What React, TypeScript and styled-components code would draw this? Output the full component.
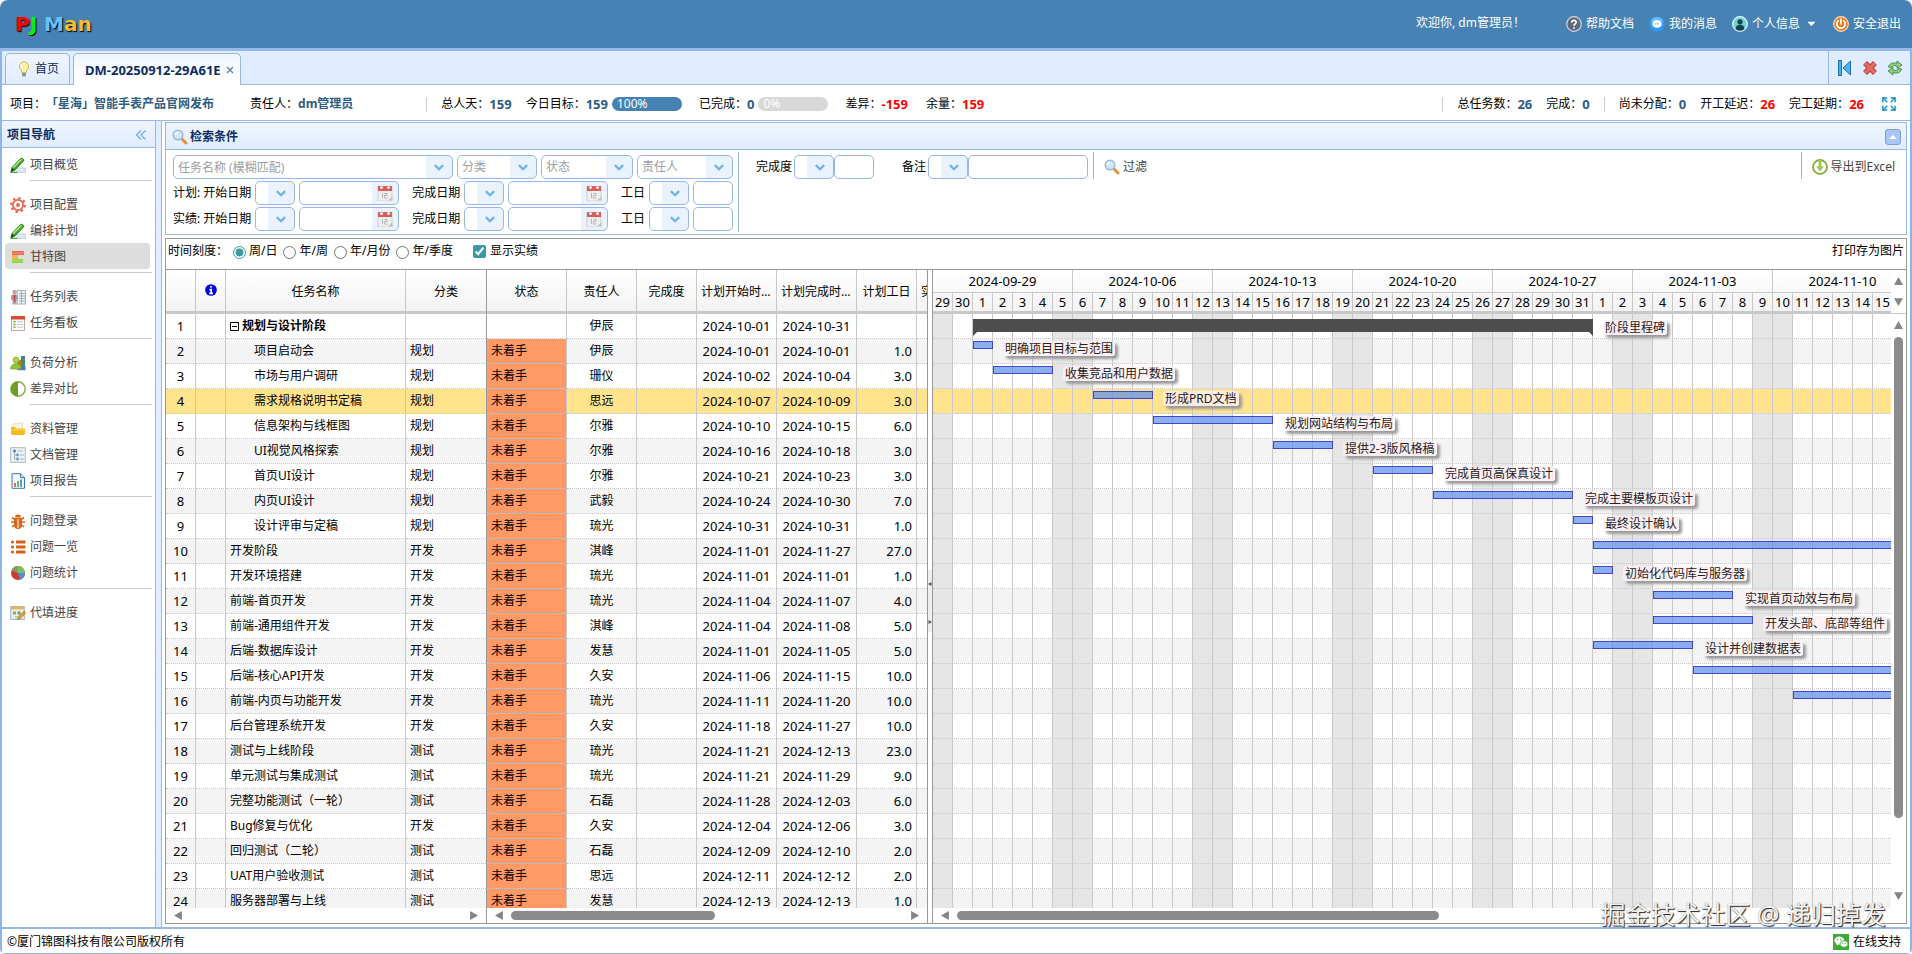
import React from "react";
import styled, { createGlobalStyle, css } from "styled-components";

const GlobalStyle = createGlobalStyle`
  *, *::before, *::after { box-sizing: border-box; }
  body {
    margin: 0;
    background: #fff;
    color: #000;
    font-family: "Noto Sans", "Noto Sans CJK SC", sans-serif;
    font-size: 12px;
    line-height: 16px;
  }
  button, input, select { font: inherit; color: inherit; }
  button { border: 0; padding: 0; background: none; cursor: pointer; }
  a { color: inherit; text-decoration: none; }
`;

const edge = "#95b8e7";
const rule = "#c8c8c8";
const frame = "#999";
const DAY = 20;
const ROW = 25;

/* ---------- page frame ---------- */

const Page = styled.div`
  display: flex;
  flex-direction: column;
  height: 100vh;
  overflow: hidden;
  position: relative;
`;

const Banner = styled.header`
  display: flex;
  align-items: center;
  height: 51px;
  flex: none;
  padding: 0 11px 0 15px;
  background: #4682b4;
  border-bottom: 3px solid ${edge};
  border-radius: 8px 8px 0 0;
  color: #fff;
`;

const Logo = styled.h1`
  margin: 0 auto 0 0;
  font: bold 20px/24px "DejaVu Sans", sans-serif;
  text-shadow: 1px 1px 1px #000;
`;

const LogoPart = styled.span<{ $tone: string }>`
  color: ${(p) => p.$tone};
`;

const UserMenu = styled.nav`
  display: flex;
  align-items: center;
  gap: 15px;
`;

const Welcome = styled.span`
  margin-right: 26px;
  padding-bottom: 2px;
`;

const IconLink = styled.a`
  display: inline-flex;
  align-items: center;
  gap: 4px;
`;

const Frame = styled.div`
  display: flex;
  flex-direction: column;
  flex: 1;
  min-height: 0;
  border: solid #8fb4ea;
  border-width: 0 2px 1px;
  border-radius: 0 0 5px 5px;
`;

const TabBar = styled.div`
  display: flex;
  align-items: flex-end;
  flex: none;
  height: 34px;
  padding-left: 3px;
  gap: 3px;
  background: #e0ecff;
  border-bottom: 1px solid ${edge};
`;

const Tab = styled.div<{ $active?: boolean }>`
  display: flex;
  align-items: center;
  height: 31px;
  gap: 3px;
  padding: 0 10px;
  border: 1px solid ${edge};
  border-bottom: 0;
  border-radius: 5px 5px 0 0;
  color: #0e2d5f;
  background: linear-gradient(#eff5ff, #e0ecff);
  ${(p) =>
    p.$active &&
    css`
      height: 32px;
      gap: 5px;
      margin-bottom: -1px;
      padding: 0 6px 0 11px;
      background: linear-gradient(#eff5ff, #fff 80%);
      font-size: 13px;
      font-weight: bold;
    `}
`;

const CloseButton = styled.button`
  display: inline-flex;
  width: 8px;
  height: 8px;
`;

const TabTools = styled.div`
  display: flex;
  align-items: center;
  align-self: stretch;
  gap: 9px;
  margin-left: auto;
  padding: 0 7px 0 8px;
  border-left: 1px solid ${edge};
`;

const ToolButton = styled.button`
  display: inline-flex;
`;

const InfoBar = styled.section`
  display: flex;
  align-items: center;
  flex: none;
  height: 35px;
  padding: 3px 14px 0 8px;
  gap: 14px;
`;

const Stat = styled.span<{ $after?: number }>`
  display: inline-flex;
  align-items: center;
  white-space: nowrap;
  margin-right: ${(p) => p.$after || 0}px;
`;

const Figure = styled.b<{ $alert?: boolean }>`
  font-size: 13px;
  color: ${(p) => (p.$alert ? "#f00" : "#2e5c82")};
`;

const Title = styled.b`
  color: #2e5c82;
`;

const Bar = styled.span<{ $done?: boolean }>`
  width: 70px;
  height: 14px;
  margin: 0 3px 0 4px;
  padding-left: 5px;
  border-radius: 7px;
  line-height: 14px;
  color: #fff;
  background: ${(p) => (p.$done ? "#4682b4" : "#d8d8d8")};
`;

const Divider = styled.i<{ $push?: boolean }>`
  width: 1px;
  height: 15px;
  background: #ccc;
  margin-left: ${(p) => (p.$push ? "auto" : "0")};
`;

const StatGap = styled.i`
  width: 45px;
`;

const Body = styled.div`
  display: flex;
  flex: 1;
  min-height: 0;
  background: #e0ecff;
  border-top: 1px solid ${edge};
`;

/* ---------- side navigation ---------- */

const Side = styled.aside`
  display: flex;
  flex-direction: column;
  width: 154px;
  flex: none;
  background: #fff;
  border-right: 1px solid ${edge};
`;

const SideHead = styled.div`
  display: flex;
  align-items: center;
  justify-content: space-between;
  height: 27px;
  padding: 2px 8px 0 5px;
  border-bottom: 1px solid ${edge};
  background: linear-gradient(#eff5ff, #e0ecff);
  color: #0e2d5f;
`;

const SideList = styled.nav`
  padding: 3px 3px 0;
`;

const SideGroup = styled.div`
  &:not(:last-child) {
    padding-bottom: 4px;
    margin-bottom: 10px;
    background: linear-gradient(${rule}, ${rule}) 25px 100% / 122px 1px no-repeat;
  }
`;

const SideItem = styled.a<{ $active?: boolean }>`
  display: flex;
  align-items: center;
  gap: 4px;
  height: 26px;
  width: 145px;
  padding: 2px 0 0 5px;
  border-radius: 4px;
  color: #444;
  background: ${(p) => (p.$active ? "#ddd" : "transparent")};
`;

/* ---------- search panel ---------- */

const Main = styled.main`
  display: flex;
  flex-direction: column;
  flex: 1;
  min-width: 0;
  gap: 3px;
  margin-left: 5px;
  padding: 1px 3px 3px;
  background: #fff;
  border-left: 1px solid ${edge};
`;

const SearchPanel = styled.section`
  flex: none;
  border: 1px solid ${edge};
`;

const SearchHead = styled.div`
  display: flex;
  align-items: center;
  gap: 2px;
  height: 27px;
  padding: 2px 5px 0 6px;
  border-bottom: 1px solid ${edge};
  background: linear-gradient(#eff5ff, #e0ecff);
  color: #0e2d5f;
`;

const CollapseButton = styled.button`
  display: flex;
  align-items: center;
  justify-content: center;
  width: 16px;
  height: 16px;
  margin-left: auto;
  border: 1px solid #7f9fd4;
  border-radius: 3px;
  background: #a9c5f2;
`;

const Filters = styled.form`
  display: flex;
  align-items: flex-start;
  padding: 2px 11px 2px 7px;
`;

const FilterBlock = styled.div`
  display: flex;
  flex-direction: column;
  gap: 2px;
  width: 566px;
  padding: 3px 5px 1px 0;
  border-right: 1px solid ${edge};
`;

const FilterRow = styled.div`
  display: flex;
  align-items: center;
  justify-content: space-between;
  height: 24px;
`;

const Group = styled.div`
  display: flex;
  align-items: center;
  gap: 4px;
`;

const FilterTail = styled.div`
  display: flex;
  align-items: center;
  gap: 28px;
  height: 30px;
  padding: 0 5px 0 17px;
`;

const TightGroup = styled.div`
  display: flex;
  align-items: center;

  label { margin-right: 2px; }
`;

const ActionBox = styled.div`
  display: flex;
  align-items: center;
  height: 27px;
  padding: 2px 0 0 10px;
  border-left: 1px solid ${edge};
`;

const Spacer = styled.div`
  flex: 1;
`;

const ActionButton = styled.button`
  display: inline-flex;
  align-items: center;
  gap: 3px;
  color: #444;
  white-space: nowrap;
`;

const Box = styled.span<{ $width: number }>`
  display: grid;
  grid-template-columns: 1fr 26px;
  align-items: center;
  width: ${(p) => p.$width}px;
  height: 24px;
  border: 1px solid ${edge};
  border-radius: 5px;
  overflow: hidden;
  background: linear-gradient(#eaf2fe, #eaf2fe) 100% 0 / 26px 100% no-repeat #fff;

  > svg {
    grid-area: 1 / 2;
    justify-self: center;
    pointer-events: none;
  }
`;

const field = css`
  width: 100%;
  height: 22px;
  border: 0;
  padding: 0 4px;
  background: none;
  outline: 0;
  appearance: none;
  color: #333;
  &::placeholder { color: #a0a0a0; opacity: 1; }
`;

const Pick = styled.select`
  ${field}
  grid-area: 1 / 1 / 2 / 3;
  color: #a0a0a0;
`;

const BoxInput = styled.input`
  ${field}
  grid-area: 1 / 1;
  min-width: 0;
`;

const PlainInput = styled.input<{ $width: number }>`
  ${field}
  width: ${(p) => p.$width}px;
  height: 24px;
  border: 1px solid ${edge};
  border-radius: 5px;
  background: #fff;
`;

/* ---------- gantt ---------- */

const GanttPanel = styled.section`
  display: flex;
  flex-direction: column;
  flex: 1;
  min-height: 0;
  border: 1px solid ${frame};
`;

const ScaleBar = styled.div`
  display: flex;
  align-items: center;
  flex: none;
  height: 30px;
  padding: 0 2px 6px;
`;

const Scales = styled.div`
  display: flex;
  align-items: center;
  margin-left: 5px;
`;

const Choice = styled.label`
  display: inline-flex;
  align-items: center;
  gap: 3px;
  margin-right: 6px;
`;

const Radio = styled.input`
  width: 13px;
  height: 13px;
  margin: 3px 0 0;
  accent-color: #3d97a5;
`;

const Check = styled.input`
  width: 13px;
  height: 13px;
  margin: 0 1px 0 14px;
  accent-color: #3d97a5;
`;

const PrintButton = styled.button`
  margin-left: auto;
`;

const Grid = styled.div`
  display: flex;
  flex: 1;
  min-height: 0;
  border-top: 1px solid ${frame};
`;

const Pane = styled.div<{ $width: number }>`
  display: flex;
  flex-direction: column;
  flex: none;
  width: ${(p) => p.$width}px;
  border-right: 1px solid ${frame};
  overflow: hidden;
`;

const PaneView = styled.div`
  flex: 1;
  min-height: 0;
  overflow: hidden;
`;

const Table = styled.table`
  width: 100%;
  table-layout: fixed;
  border-collapse: separate;
  border-spacing: 0;
`;

const headFill = "linear-gradient(#fff, #f3f3f3)";

const Th = styled.th`
  height: 44px;
  padding: 2px 0 0;
  border-right: 1px solid ${rule};
  border-bottom: 3px solid ${rule};
  background: ${headFill};
  font-weight: normal;
  white-space: nowrap;
  overflow: hidden;
  &:last-child { border-right: 0; }
`;

const HeadText = styled.span`
  display: block;
  padding: 0 4px;
  overflow: hidden;
  text-overflow: ellipsis;
`;

const ClipText = styled.span`
  display: block;
  padding-left: 4px;
  overflow: hidden;
`;

type RowTone = "plain" | "even" | "selected";
const toneFill: Record<RowTone, string> = { plain: "#fff", even: "#f4f4f4", selected: "#ffe48d" };

const Tr = styled.tr<{ $tone: RowTone }>`
  background: ${(p) => toneFill[p.$tone]};
`;

const Td = styled.td<{ $align?: string; $number?: boolean; $late?: boolean; $indent?: boolean }>`
  height: ${ROW}px;
  padding: 0 4px 0 ${(p) => (p.$indent ? 28 : 4)}px;
  border-right: 1px solid ${rule};
  border-bottom: 1px dotted ${rule};
  text-align: ${(p) => p.$align || "left"};
  white-space: nowrap;
  overflow: hidden;
  font-size: ${(p) => (p.$number ? "13px" : "12px")};
  background: ${(p) => (p.$late ? "#ff9966" : "transparent")};
  &:last-child { border-right: 0; }
`;

const Toggle = styled.button`
  display: inline-flex;
  vertical-align: -1px;
  margin-right: 3px;
`;

const ScrollRow = styled.div`
  display: flex;
  align-items: center;
  justify-content: space-between;
  flex: none;
  height: 15px;
  padding: 0 8px;
`;

const ScrollTrack = styled.div`
  flex: 1;
  padding: 0 7px;
`;

const ScrollThumb = styled.div<{ $share: number }>`
  width: ${(p) => p.$share}%;
  height: 9px;
  border-radius: 5px;
  background: #8b8b8b;
`;

const Chart = styled.div`
  display: flex;
  flex: 1;
  min-width: 0;
  margin-left: 4px;
  border-left: 1px solid ${frame};
`;

const ChartPane = styled.div`
  display: flex;
  flex-direction: column;
  flex: 1;
  min-width: 0;
`;

const ChartHead = styled.div`
  flex: none;
  height: 44px;
  overflow: hidden;
  border-bottom: 3px solid ${rule};
  background: ${headFill};
`;

const Weeks = styled.div`
  display: flex;
  height: 23px;
  border-bottom: 1px solid ${rule};
`;

const Week = styled.div`
  flex: none;
  width: ${DAY * 7}px;
  border-right: 1px solid ${rule};
  text-align: center;
  font-size: 13px;
  line-height: 22px;
`;

const Days = styled.div`
  display: flex;
  height: 18px;
`;

const Day = styled.div`
  flex: none;
  width: ${DAY}px;
  border-right: 1px solid ${rule};
  text-align: center;
  font-size: 13px;
  line-height: 18px;
`;

const weekend =
  "repeating-linear-gradient(90deg, #e6e6e6 0 20px, transparent 20px 120px, #e6e6e6 120px 140px)";
const dayLines = "repeating-linear-gradient(90deg, transparent 0 19px, #c8c8c8 19px 20px)";

const ChartRow = styled.div<{ $tone: RowTone }>`
  display: flex;
  align-items: flex-start;
  height: ${ROW}px;
  border-bottom: 1px dotted ${rule};
  background: ${(p) => (p.$tone === "selected" ? dayLines : `${dayLines}, ${weekend}`)} ${(p) =>
      toneFill[p.$tone]};
`;

const TaskBar = styled.div`
  flex: none;
  height: 8px;
  margin-top: 2px;
  border: 1px solid #4545c8;
  background: rgba(90, 143, 240, 0.7);
`;

const StageBar = styled.div`
  flex: none;
  height: 17px;
  margin-top: 5px;
  background: #4d4d4d;
  clip-path: polygon(0 0, 100% 0, 100% 100%, calc(100% - 4px) 13px, 4px 13px, 0 100%);
`;

const BarLabel = styled.span<{ $stage?: boolean }>`
  flex: none;
  height: 15px;
  margin: ${(p) => (p.$stage ? 6 : 2)}px 0 0 10px;
  padding: 0 2px;
  border-radius: 3px;
  line-height: 15px;
  white-space: nowrap;
  color: #222;
  background: rgba(255, 240, 245, 0.8);
  box-shadow: 3px 3px 3px #999;
`;

const VScroll = styled.div`
  display: flex;
  flex-direction: column;
  flex: none;
  width: 15px;
`;

const VHead = styled.div`
  display: flex;
  flex-direction: column;
  align-items: center;
  justify-content: space-between;
  height: 44px;
  padding: 7px 0 7px;
  border-bottom: 1px solid ${rule};
`;

const VTrack = styled.div`
  display: flex;
  flex-direction: column;
  align-items: center;
  flex: 1;
  padding: 7px 0 23px;
`;

const VRail = styled.div`
  flex: 1;
  width: 9px;
  padding: 7px 0;
`;

const VThumb = styled.div`
  height: 88%;
  border-radius: 5px;
  background: #8b8b8b;
`;

const SplitHandle = styled.button`
  position: absolute;
  left: 928px;
  top: 570px;
  display: flex;
  flex-direction: column;
  justify-content: space-between;
  width: 4px;
  height: 62px;
  padding: 12px 0 8px;
  background: #eee;
`;

const Footer = styled.footer`
  display: flex;
  align-items: center;
  justify-content: space-between;
  flex: none;
  height: 26px;
  padding: 2px 9px 0 5px;
  border-top: 2px solid ${edge};
  background: #fff;
`;

const Watermark = styled.div`
  position: absolute;
  right: 26px;
  bottom: 22px;
  color: #f4f4f4;
  font-size: 25px;
  line-height: 36px;
  white-space: nowrap;
  text-shadow: 1px 1px 1px #222, 0 0 1px #888;
  pointer-events: none;
`;

/* ---------- icons ---------- */

const Svg = ({ size = 16, box = 16, children }: { size?: number; box?: number; children: React.ReactNode }) => (
  <svg width={size} height={size} viewBox={`0 0 ${box} ${box}`} fill="none" aria-hidden="true">
    {children}
  </svg>
);

const Chevron = () => (
  <Svg size={12}>
    <path d="M2.500 5.500 8 11l5.500-5.500" stroke="#6fb3e3" strokeWidth="3" />
  </Svg>
);

const Calendar = () => (
  <Svg>
    <rect x="1" y="2" width="14" height="14" fill="#efefef" stroke="#cfcfcf" />
    <rect x="1" y="1" width="14" height="5" fill="#dc5a5a" />
    <circle cx="4.500" cy="2.500" r="1.500" fill="#fff" stroke="#c9a0a0" strokeWidth=".5" />
    <circle cx="11.500" cy="2.500" r="1.500" fill="#fff" stroke="#c9a0a0" strokeWidth=".5" />
    <path d="M5.500 8v5M7.500 8.500h2.500v2h-2.500v2.500h3" stroke="#b5b5b5" />
    <path d="M11 15.500 15.500 11v4.500z" fill="#c4c4c4" />
  </Svg>
);

const Arrow = ({ dir }: { dir: "left" | "right" | "up" | "down" }) => {
  const d = {
    left: "M7 0v8L0 4z",
    right: "M1 0v8l7-4z",
    up: "M0 7h8L4 0z",
    down: "M0 1h8L4 8z",
  }[dir];
  return (
    <Svg size={9} box={8}>
      <path d={d} fill="#858585" />
    </Svg>
  );
};

const Bulb = () => (
  <Svg size={16}>
    <path d="M8 .8a4.600 4.600 0 0 0-4.600 4.600C3.400 8 5.700 8.800 5.900 11.500h4.200C10.300 8.800 12.600 8 12.600 5.400A4.600 4.600 0 0 0 8 .8z" fill="#fbf0a4" stroke="#c9b562" />
    <path d="M6.500 3.200c-1 .7-1.400 1.600-1.200 3" stroke="#fff" strokeWidth="1.400" />
    <path d="M6 12h4v2.300L9 15.600H7l-1-1.300z" fill="#8d95a0" />
  </Svg>
);

const Magnifier = () => (
  <Svg>
    <path d="m9.500 9.500 4.500 4.500" stroke="#e0913a" strokeWidth="3" strokeLinecap="round" />
    <circle cx="6" cy="6" r="4.800" fill="#cfe6fb" stroke="#9db8d4" strokeWidth="1.500" />
    <path d="M3.500 5.500A3 3 0 0 1 6 3.300" stroke="#fff" strokeWidth="1.200" />
  </Svg>
);

const Help = () => (
  <Svg>
    <circle cx="8" cy="8" r="7.300" fill="#5e6a7c" stroke="#d3d9e2" strokeWidth="1.200" />
    <path d="M5.800 6.400C5.800 3.600 10.300 3.700 10.200 6.300 10.100 7.900 8 7.900 8 9.800M8 11.200v1.600" stroke="#fff" strokeWidth="1.700" />
  </Svg>
);

const Message = () => (
  <Svg>
    <circle cx="8" cy="8" r="7.500" fill="#2f9bf5" />
    <path d="M1.500 5.500a7 7 0 0 1 13 0z" fill="#7cc5ff" opacity=".7" />
    <ellipse cx="8" cy="7.900" rx="4.800" ry="3.900" fill="#fff" />
    <path d="M5.200 7.900h5.600" stroke="#9fd0fa" strokeWidth="1.400" />
  </Svg>
);

const Person = () => (
  <Svg>
    <circle cx="8" cy="8" r="7.300" fill="#6fd0d6" stroke="#e2f6f7" strokeWidth="1.300" />
    <circle cx="8" cy="5.800" r="2.600" fill="#14424e" />
    <path d="M3.600 13c.2-3 1.800-4.300 4.400-4.300s4.200 1.300 4.400 4.300A6.500 6.500 0 0 1 8 14.700 6.500 6.500 0 0 1 3.600 13z" fill="#14424e" />
  </Svg>
);

const Power = () => (
  <Svg>
    <circle cx="8" cy="8" r="7.300" fill="#f07818" stroke="#ffe0c2" strokeWidth="1.200" />
    <path d="M5.300 4.700a4.200 4.200 0 1 0 5.400 0M8 3v5" stroke="#fff" strokeWidth="1.700" strokeLinecap="round" />
  </Svg>
);

const First = () => (
  <Svg>
    <rect x="1.500" y=".5" width="3" height="15" fill="#4bb4ea" stroke="#1b6fae" />
    <path d="M13.500 1v14L6 8z" fill="#4bb4ea" stroke="#1b6fae" />
  </Svg>
);

const Cross = () => (
  <Svg>
    <path d="m3 3 10 10M13 3 3 13" stroke="#b93a37" strokeWidth="5.500" />
    <path d="m3 3 10 10M13 3 3 13" stroke="#e26b66" strokeWidth="3.500" />
  </Svg>
);

const Refresh = () => (
  <Svg>
    <path d="M1.500 7C2 3.500 6 2 10 3.500V1l5 4-5 3.500V6C7 5 5 5.500 4.500 7.500z" fill="#8fd07f" stroke="#4c8f43" />
    <path d="M14.500 9c-.5 3.500-4.500 5-8.500 3.500V15l-5-4 5-3.500V10c3 1 5 .5 5.500-1.500z" fill="#8fd07f" stroke="#4c8f43" />
  </Svg>
);

const Expand = () => (
  <Svg size={14}>
    <path d="M1 6V1h5M1.500 1.500 6 6M10 1h5v5M14.500 1.500 10 6M1 10v5h5M1.500 14.500 6 10M15 10v5h-5M14.500 14.500 10 10" stroke="#2f9bd6" strokeWidth="1.800" />
  </Svg>
);

const Download = () => (
  <Svg>
    <circle cx="8" cy="8" r="7" fill="#fff" stroke="#8cae3c" strokeWidth="1.800" />
    <path d="M6.500 1h3v6.500H12L8 12.500 4 7.500h2.500z" fill="#a3c955" />
  </Svg>
);

const Wechat = () => (
  <Svg>
    <rect width="16" height="16" fill="#3fab35" />
    <ellipse cx="6.300" cy="6.500" rx="4.900" ry="4" fill="#fff" />
    <path d="m3.500 9 .2 2.500L6.500 10z" fill="#fff" />
    <ellipse cx="11" cy="10" rx="4" ry="3.300" fill="#fff" stroke="#3fab35" strokeWidth=".8" />
    <circle cx="4.700" cy="5.500" r=".7" fill="#3fab35" />
    <circle cx="7.800" cy="5.500" r=".7" fill="#3fab35" />
    <circle cx="9.700" cy="9.300" r=".6" fill="#3fab35" />
    <circle cx="12.300" cy="9.300" r=".6" fill="#3fab35" />
  </Svg>
);

const Pencil = () => (
  <Svg>
    <path d="M7 15.500V11h8.500v4.500z" fill="#dbe8f5" stroke="#b9cde2" strokeWidth=".8" />
    <path d="M.8 15 2 10.500 10.500 1.500c1.300-1 3.700.6 3.200 2.300L5 13z" fill="#46a52a" stroke="#1d6d14" strokeWidth=".8" />
    <path d="m3.200 10.800 8.300-8.500" stroke="#b5ec8b" strokeWidth="1.300" />
    <path d="M.8 15 2 11l2.800 2z" fill="#2c4a24" />
    <path d="M.5 15.300h7" stroke="#2f8c3b" />
  </Svg>
);

const Gear = () => (
  <Svg>
    <circle cx="8" cy="8" r="6.800" stroke="#e5684f" strokeWidth="2.200" strokeDasharray="2.400 2.940" />
    <circle cx="8" cy="8" r="5.100" stroke="#e5684f" strokeWidth="1.800" />
    <circle cx="8" cy="8" r="2" fill="#e5684f" />
  </Svg>
);

const GanttIcon = () => (
  <Svg>
    <rect x="2" y="2" width="12" height="4" fill="#ea6a52" />
    <rect x="2" y="6" width="6" height="4" fill="#f5b454" />
    <rect x="2" y="10" width="11" height="4" fill="#8ed43c" />
    <path d="M2 4h12M2 12h11" stroke="#fff" strokeOpacity=".3" />
  </Svg>
);

const TaskList = () => (
  <Svg>
    <rect x="7" y="1.500" width="8.500" height="13.500" fill="#eef1f4" stroke="#a7b0b9" />
    <path d="M9 4.500h6M9 7h6M9 9.500h6M9 12h6M11.500 2v13" stroke="#a7b0b9" />
    <circle cx="4.500" cy="3" r="2.200" fill="#b9a9a2" />
    <path d="M1 6h7v5H6.500v4.500H2.500V11H1z" fill="#a8a8ac" />
    <path d="M3.200 5.500h2.600L5.200 13H3.800z" fill="#d84545" />
  </Svg>
);

const Board = () => (
  <Svg>
    <rect x="1.500" y="1.500" width="13" height="14" fill="#fafafa" stroke="#b9aea6" />
    <rect x="1" y="1" width="14" height="3.500" fill="#d9492f" />
    <path d="M3.500 6.800h2M3.500 9.500h2M3.500 12.300h2" stroke="#7aa83a" strokeWidth="1.500" />
    <path d="M7 6.800h6M7 9.500h6M7 12.300h6" stroke="#cfc8c2" />
  </Svg>
);

const Load = () => (
  <Svg>
    <rect x="11" y="1" width="4" height="14" fill="#3f8c6e" />
    <rect x="7" y="5" width="4" height="10" fill="#d86a3a" />
    <circle cx="6" cy="5" r="3" fill="#a8d93c" stroke="#79a821" strokeWidth=".6" />
    <path d="M.5 14c.3-3.700 2.300-5.300 5.500-5.300s5 1.600 5.300 5.300z" fill="#8cc63a" stroke="#6a9a1f" strokeWidth=".6" />
    <path d="M8 15.200h7.500V11L12 12.500z" fill="#4979b8" />
  </Svg>
);

const Contrast = () => (
  <Svg>
    <circle cx="8" cy="8" r="7.200" fill="#fff" stroke="#7fae3c" strokeWidth="1.400" />
    <path d="M8 .8a7.200 7.200 0 0 0 0 14.400z" fill="#6f9d28" />
  </Svg>
);

const FolderIcon = () => (
  <Svg>
    <path d="M3 3 12.500 1.500V9H3z" fill="#f6f1e4" stroke="#e2d6b8" strokeWidth=".7" />
    <path d="M1 6h4l1 1.500h9V12a2 2 0 0 1-2 2H3a2 2 0 0 1-2-2z" fill="#f9b81a" />
    <path d="M1.500 9h13" stroke="#fdd566" />
  </Svg>
);

const Docs = () => (
  <Svg>
    <rect x=".7" y=".7" width="14.600" height="14.600" fill="#eef2f5" stroke="#adb9c2" />
    <circle cx="4.500" cy="4" r="1.600" fill="#4a86b8" />
    <circle cx="7.500" cy="8" r="1.400" fill="#5f9ac8" />
    <circle cx="7.500" cy="12" r="1.400" fill="#5f9ac8" />
    <path d="M4.500 5.500V12H6M4.500 8H6M10 8h4M10 12h4M7.500 4H13" stroke="#9fb4c4" />
  </Svg>
);

const Report = () => (
  <Svg>
    <path d="M2 .7h8.500l4 4v10.600H2z" fill="#f4f9fd" stroke="#3f76a8" />
    <path d="M10.500.7v4h4" fill="#cfe2f3" stroke="#3f76a8" />
    <path d="M5 14v-4" stroke="#d94a2b" strokeWidth="1.600" />
    <path d="M8 14V8" stroke="#58a83a" strokeWidth="1.600" />
    <path d="M11 14V6.500" stroke="#3d7fc4" strokeWidth="1.600" />
  </Svg>
);

const Bug = () => (
  <Svg>
    <path d="M4 5h8v7a4 4 0 0 1-8 0zM5 4.500a3 3 0 0 1 6 0z" fill="#d8681c" />
    <path d="M1 9h3M12 9h3M2 4.500l3 2M14 4.500l-3 2M2 14l3-2.500M14 14l-3-2.500" stroke="#d8681c" strokeWidth="1.600" />
    <path d="M8 6v9" stroke="#fff" />
  </Svg>
);

const ListIcon = () => (
  <Svg>
    <g fill="#d2611a">
      <circle cx="2.500" cy="3" r="1.600" />
      <circle cx="2.500" cy="8" r="1.600" />
      <circle cx="2.500" cy="13" r="1.600" />
      <rect x="6" y="1.500" width="9.500" height="3" rx=".5" />
      <rect x="6" y="6.500" width="9.500" height="3" rx=".5" />
      <rect x="6" y="11.500" width="9.500" height="3" rx=".5" />
    </g>
  </Svg>
);

const Pie = () => (
  <Svg>
    <circle cx="8" cy="8" r="7" fill="#cf3a34" />
    <path d="M8 8V1a7 7 0 0 1 7 7z" fill="#7cbf62" />
    <path d="M8 8h7a7 7 0 0 1-5 6.700z" fill="#4a93cf" />
    <path d="M8 8V1a7 7 0 0 0-6.500 4.500z" fill="#8b9a56" />
  </Svg>
);

const Fill = () => (
  <Svg>
    <rect x=".8" y="1.500" width="13.500" height="13" fill="#e6f0f2" stroke="#a4b6bd" />
    <rect x="1" y="1.500" width="13" height="3" fill="#e8b565" />
    <rect x="3" y="6.500" width="3" height="3" fill="#7fb04c" />
    <rect x="7.500" y="6.500" width="3" height="3" fill="#6aa24a" />
    <rect x="5" y="11" width="3" height="2.500" fill="#b9d6a0" />
    <path d="m7.500 14.500 1-3L14 6l1.800 2-5.500 5.500z" fill="#e79a3d" stroke="#b06e22" strokeWidth=".6" />
  </Svg>
);

const Info = () => (
  <Svg size={12}>
    <circle cx="8" cy="8" r="7.800" fill="#0000e0" />
    <path d="M8 2.500v2.600M6 7.400h2.300v5M5.600 12.500h5" stroke="#fff" strokeWidth="2.200" />
  </Svg>
);

/* ---------- data ---------- */

const navGroups: { label: string; icon: React.ReactNode; active?: boolean }[][] = [
  [{ label: "项目概览", icon: <Pencil /> }],
  [
    { label: "项目配置", icon: <Gear /> },
    { label: "编排计划", icon: <Pencil /> },
    { label: "甘特图", icon: <GanttIcon />, active: true },
  ],
  [
    { label: "任务列表", icon: <TaskList /> },
    { label: "任务看板", icon: <Board /> },
  ],
  [
    { label: "负荷分析", icon: <Load /> },
    { label: "差异对比", icon: <Contrast /> },
  ],
  [
    { label: "资料管理", icon: <FolderIcon /> },
    { label: "文档管理", icon: <Docs /> },
    { label: "项目报告", icon: <Report /> },
  ],
  [
    { label: "问题登录", icon: <Bug /> },
    { label: "问题一览", icon: <ListIcon /> },
    { label: "问题统计", icon: <Pie /> },
  ],
  [{ label: "代填进度", icon: <Fill /> }],
];

type Task = {
  name: string;
  kind: string;
  owner: string;
  from: string;
  to: string;
  days: string;
  level?: "stage" | "child";
  note?: string;
};

const tasks: Task[] = [
  { name: "规划与设计阶段", kind: "", owner: "伊辰", from: "2024-10-01", to: "2024-10-31", days: "", level: "stage", note: "阶段里程碑" },
  { name: "项目启动会", kind: "规划", owner: "伊辰", from: "2024-10-01", to: "2024-10-01", days: "1.0", level: "child", note: "明确项目目标与范围" },
  { name: "市场与用户调研", kind: "规划", owner: "珊仪", from: "2024-10-02", to: "2024-10-04", days: "3.0", level: "child", note: "收集竞品和用户数据" },
  { name: "需求规格说明书定稿", kind: "规划", owner: "思远", from: "2024-10-07", to: "2024-10-09", days: "3.0", level: "child", note: "形成PRD文档" },
  { name: "信息架构与线框图", kind: "规划", owner: "尔雅", from: "2024-10-10", to: "2024-10-15", days: "6.0", level: "child", note: "规划网站结构与布局" },
  { name: "UI视觉风格探索", kind: "规划", owner: "尔雅", from: "2024-10-16", to: "2024-10-18", days: "3.0", level: "child", note: "提供2-3版风格稿" },
  { name: "首页UI设计", kind: "规划", owner: "尔雅", from: "2024-10-21", to: "2024-10-23", days: "3.0", level: "child", note: "完成首页高保真设计" },
  { name: "内页UI设计", kind: "规划", owner: "武毅", from: "2024-10-24", to: "2024-10-30", days: "7.0", level: "child", note: "完成主要模板页设计" },
  { name: "设计评审与定稿", kind: "规划", owner: "琉光", from: "2024-10-31", to: "2024-10-31", days: "1.0", level: "child", note: "最终设计确认" },
  { name: "开发阶段", kind: "开发", owner: "淇峰", from: "2024-11-01", to: "2024-11-27", days: "27.0" },
  { name: "开发环境搭建", kind: "开发", owner: "琉光", from: "2024-11-01", to: "2024-11-01", days: "1.0", note: "初始化代码库与服务器" },
  { name: "前端-首页开发", kind: "开发", owner: "琉光", from: "2024-11-04", to: "2024-11-07", days: "4.0", note: "实现首页动效与布局" },
  { name: "前端-通用组件开发", kind: "开发", owner: "淇峰", from: "2024-11-04", to: "2024-11-08", days: "5.0", note: "开发头部、底部等组件" },
  { name: "后端-数据库设计", kind: "开发", owner: "发慧", from: "2024-11-01", to: "2024-11-05", days: "5.0", note: "设计并创建数据表" },
  { name: "后端-核心API开发", kind: "开发", owner: "久安", from: "2024-11-06", to: "2024-11-15", days: "10.0" },
  { name: "前端-内页与功能开发", kind: "开发", owner: "琉光", from: "2024-11-11", to: "2024-11-20", days: "10.0" },
  { name: "后台管理系统开发", kind: "开发", owner: "久安", from: "2024-11-18", to: "2024-11-27", days: "10.0" },
  { name: "测试与上线阶段", kind: "测试", owner: "琉光", from: "2024-11-21", to: "2024-12-13", days: "23.0" },
  { name: "单元测试与集成测试", kind: "测试", owner: "琉光", from: "2024-11-21", to: "2024-11-29", days: "9.0" },
  { name: "完整功能测试（一轮）", kind: "测试", owner: "石磊", from: "2024-11-28", to: "2024-12-03", days: "6.0" },
  { name: "Bug修复与优化", kind: "开发", owner: "久安", from: "2024-12-04", to: "2024-12-06", days: "3.0" },
  { name: "回归测试（二轮）", kind: "测试", owner: "石磊", from: "2024-12-09", to: "2024-12-10", days: "2.0" },
  { name: "UAT用户验收测试", kind: "测试", owner: "思远", from: "2024-12-11", to: "2024-12-12", days: "2.0" },
  { name: "服务器部署与上线", kind: "测试", owner: "发慧", from: "2024-12-13", to: "2024-12-13", days: "1.0" },
];

const MS = 86400000;
const origin = Date.parse("2024-09-29");
const dayIndex = (date: string) => Math.round((Date.parse(date) - origin) / MS);
const weeks = Array.from({ length: 7 }, (_, i) => new Date(origin + i * 7 * MS).toISOString().slice(0, 10));
const days = Array.from({ length: 48 }, (_, i) => new Date(origin + i * MS).getUTCDate());
const toneOf = (i: number): RowTone => (i === 3 ? "selected" : i % 2 ? "even" : "plain");

/* ---------- composed parts ---------- */

const Combo = ({ width = 40, label, hint = "" }: { width?: number; label: string; hint?: string }) => (
  <Box $width={width}>
    <Pick aria-label={label} defaultValue="">
      <option value="">{hint}</option>
    </Pick>
    <Chevron />
  </Box>
);

const DateField = ({ id }: { id: string }) => (
  <Box $width={100}>
    <BoxInput id={id} type="text" />
    <Calendar />
  </Box>
);

const DateFilterRow = ({ id, title }: { id: string; title: string }) => (
  <FilterRow>
    <Group>
      <label htmlFor={`${id}-start`}>{title}: 开始日期</label>
      <Combo label={`${title}开始日期条件`} />
      <DateField id={`${id}-start`} />
    </Group>
    <Group>
      <label htmlFor={`${id}-end`}>完成日期</label>
      <Combo label={`${title}完成日期条件`} />
      <DateField id={`${id}-end`} />
    </Group>
    <Group>
      <label htmlFor={`${id}-days`}>工日</label>
      <Combo label={`${title}工日条件`} />
      <PlainInput id={`${id}-days`} $width={40} type="text" />
    </Group>
  </FilterRow>
);

const HScroll = ({ share }: { share?: number }) => (
  <ScrollRow>
    <Arrow dir="left" />
    <ScrollTrack>{share ? <ScrollThumb $share={share} /> : null}</ScrollTrack>
    <Arrow dir="right" />
  </ScrollRow>
);

const FrozenTable = () => (
  <Table>
    <colgroup>
      <col width="30" />
      <col width="30" />
      <col width="180" />
      <col />
    </colgroup>
    <thead>
      <tr>
        <Th />
        <Th><Info /></Th>
        <Th>任务名称</Th>
        <Th>分类</Th>
      </tr>
    </thead>
    <tbody>
      {tasks.map((t, i) => (
        <Tr key={t.name} $tone={toneOf(i)}>
          <Td $align="center" $number>{i + 1}</Td>
          <Td />
          <Td $indent={t.level === "child"}>
            {t.level === "stage" ? (
              <>
                <Toggle aria-label="折叠">
                  <Svg size={9} box={9}>
                    <path d="M.5.5h8v8h-8zM2 4.500h5" stroke="#000" />
                  </Svg>
                </Toggle>
                <b>{t.name}</b>
              </>
            ) : (
              t.name
            )}
          </Td>
          <Td>{t.kind}</Td>
        </Tr>
      ))}
    </tbody>
  </Table>
);

const DetailTable = () => (
  <Table>
    <colgroup>
      <col width="80" />
      <col width="70" />
      <col width="60" />
      <col width="80" />
      <col width="80" />
      <col width="60" />
      <col />
    </colgroup>
    <thead>
      <tr>
        <Th>状态</Th>
        <Th>责任人</Th>
        <Th>完成度</Th>
        <Th><HeadText>计划开始时间</HeadText></Th>
        <Th><HeadText>计划完成时间</HeadText></Th>
        <Th>计划工日</Th>
        <Th><ClipText>实</ClipText></Th>
      </tr>
    </thead>
    <tbody>
      {tasks.map((t, i) => (
        <Tr key={t.name} $tone={toneOf(i)}>
          <Td $late={t.level !== "stage"}>{t.level !== "stage" && "未着手"}</Td>
          <Td $align="center">{t.owner}</Td>
          <Td />
          <Td $align="center" $number>{t.from}</Td>
          <Td $align="center" $number>{t.to}</Td>
          <Td $align="right" $number>{t.days}</Td>
          <Td />
        </Tr>
      ))}
    </tbody>
  </Table>
);

const ChartRows = () => (
  <>
    {tasks.map((t, i) => {
      const start = dayIndex(t.from);
      const span = dayIndex(t.to) - start + 1;
      const place = { marginLeft: start * DAY, width: span * DAY };
      const stage = t.level === "stage";
      return (
        <ChartRow key={t.name} $tone={toneOf(i)}>
          {start < days.length && (stage ? <StageBar style={place} /> : <TaskBar style={place} />)}
          {t.note && <BarLabel $stage={stage}>{t.note}</BarLabel>}
        </ChartRow>
      );
    })}
  </>
);

export default function App() {
  return (
    <Page>
      <GlobalStyle />
      <Banner>
        <Logo>
          <LogoPart $tone="#ff0000">P</LogoPart>
          <LogoPart $tone="#00f020">J</LogoPart> <LogoPart $tone="#66c2ff">M</LogoPart>
          <LogoPart $tone="#f5bd2c">an</LogoPart>
        </Logo>
        <UserMenu>
          <Welcome>欢迎你, dm管理员！</Welcome>
          <IconLink href="#help"><Help />帮助文档</IconLink>
          <IconLink href="#message"><Message />我的消息</IconLink>
          <IconLink href="#profile">
            <Person />个人信息
            <Svg size={14}><path d="M4 5.500h9L8.500 10.500z" fill="#fff" /></Svg>
          </IconLink>
          <IconLink href="#exit"><Power />安全退出</IconLink>
        </UserMenu>
      </Banner>

      <Frame>
        <TabBar>
          <Tab><Bulb />首页</Tab>
          <Tab $active>
            DM-20250912-29A61E
            <CloseButton aria-label="关闭">
              <Svg size={8} box={8}><path d="m1 1 6 6M7 1 1 7" stroke="#5f7fb0" strokeWidth="1.300" /></Svg>
            </CloseButton>
          </Tab>
          <TabTools>
            <ToolButton aria-label="收起"><First /></ToolButton>
            <ToolButton aria-label="关闭标签"><Cross /></ToolButton>
            <ToolButton aria-label="刷新"><Refresh /></ToolButton>
          </TabTools>
        </TabBar>

        <InfoBar>
          <Stat $after={22}>项目：<Title>「星海」智能手表产品官网发布</Title></Stat>
          <Stat>责任人：<Title>dm管理员</Title></Stat>
          <StatGap />
          <Divider />
          <Stat>总人天：<Figure>159</Figure></Stat>
          <Stat>今日目标：<Figure>159</Figure><Bar $done>100%</Bar></Stat>
          <Stat>已完成：<Figure>0</Figure><Bar>0%</Bar></Stat>
          <Stat $after={4}>差异：<Figure $alert>-159</Figure></Stat>
          <Stat>余量：<Figure $alert>159</Figure></Stat>
          <Divider $push />
          <Stat>总任务数：<Figure>26</Figure></Stat>
          <Stat>完成：<Figure>0</Figure></Stat>
          <Divider />
          <Stat>尚未分配：<Figure>0</Figure></Stat>
          <Stat>开工延迟：<Figure $alert>26</Figure></Stat>
          <Stat $after={4}>完工延期：<Figure $alert>26</Figure></Stat>
          <ToolButton aria-label="全屏"><Expand /></ToolButton>
        </InfoBar>

        <Body>
          <Side>
            <SideHead>
              <b>项目导航</b>
              <ToolButton aria-label="收起导航">
                <Svg size={12}><path d="M8 2 2 8l6 6M14 2 8 8l6 6" stroke="#6fb0e6" strokeWidth="1.800" /></Svg>
              </ToolButton>
            </SideHead>
            <SideList>
              {navGroups.map((group) => (
                <SideGroup key={group[0].label}>
                  {group.map((item) => (
                    <SideItem key={item.label} href="#nav" $active={item.active}>
                      {item.icon}
                      {item.label}
                    </SideItem>
                  ))}
                </SideGroup>
              ))}
            </SideList>
          </Side>

          <Main>
            <SearchPanel>
              <SearchHead>
                <Magnifier />
                <b>检索条件</b>
                <CollapseButton aria-label="折叠检索条件">
                  <Svg size={8} box={8}><path d="M0 6h8L4 2z" fill="#fff" /></Svg>
                </CollapseButton>
              </SearchHead>
              <Filters onSubmit={(e) => e.preventDefault()}>
                <FilterBlock>
                  <FilterRow>
                    <Box $width={280}>
                      <BoxInput aria-label="任务名称" placeholder="任务名称 (模糊匹配)" />
                      <Chevron />
                    </Box>
                    <Combo width={80} label="分类" hint="分类" />
                    <Combo width={92} label="状态" hint="状态" />
                    <Combo width={96} label="责任人" hint="责任人" />
                  </FilterRow>
                  <DateFilterRow id="plan" title="计划" />
                  <DateFilterRow id="actual" title="实绩" />
                </FilterBlock>
                <FilterTail>
                  <TightGroup>
                    <label htmlFor="progress">完成度</label>
                    <Combo label="完成度条件" />
                    <PlainInput id="progress" $width={40} type="text" />
                  </TightGroup>
                  <TightGroup>
                    <label htmlFor="remark">备注</label>
                    <Combo label="备注条件" />
                    <PlainInput id="remark" $width={120} type="text" />
                  </TightGroup>
                </FilterTail>
                <ActionBox>
                  <ActionButton type="submit"><Magnifier />过滤</ActionButton>
                </ActionBox>
                <Spacer />
                <ActionBox>
                  <ActionButton type="button"><Download />导出到Excel</ActionButton>
                </ActionBox>
              </Filters>
            </SearchPanel>

            <GanttPanel>
              <ScaleBar>
                时间刻度：
                <Scales>
                  {["周/日", "年/周", "年/月份", "年/季度"].map((s, i) => (
                    <Choice key={s}>
                      <Radio type="radio" name="scale" defaultChecked={i === 0} />
                      {s}
                    </Choice>
                  ))}
                  <Choice>
                    <Check type="checkbox" defaultChecked />
                    显示实绩
                  </Choice>
                </Scales>
                <PrintButton>打印存为图片</PrintButton>
              </ScaleBar>
              <Grid>
                <Pane $width={321}>
                  <PaneView><FrozenTable /></PaneView>
                  <HScroll />
                </Pane>
                <Pane $width={441}>
                  <PaneView><DetailTable /></PaneView>
                  <HScroll share={52} />
                </Pane>
                <Chart>
                  <ChartPane>
                    <ChartHead>
                      <Weeks>{weeks.map((w) => <Week key={w}>{w}</Week>)}</Weeks>
                      <Days>{days.map((d, i) => <Day key={i}>{d}</Day>)}</Days>
                    </ChartHead>
                    <PaneView><ChartRows /></PaneView>
                    <HScroll share={53} />
                  </ChartPane>
                  <VScroll>
                    <VHead>
                      <Arrow dir="up" />
                      <Arrow dir="down" />
                    </VHead>
                    <VTrack>
                      <Arrow dir="up" />
                      <VRail><VThumb /></VRail>
                      <Arrow dir="down" />
                    </VTrack>
                  </VScroll>
                </Chart>
              </Grid>
            </GanttPanel>
          </Main>
        </Body>

        <Footer>
          <span>©厦门锦图科技有限公司版权所有</span>
          <IconLink href="#support"><Wechat />在线支持</IconLink>
        </Footer>
      </Frame>

      <SplitHandle aria-label="调整宽度">
        <Svg size={4} box={8}><path d="M7 0v8L0 4z" fill="#555" /></Svg>
        <Svg size={4} box={8}><path d="M1 0v8l7-4z" fill="#555" /></Svg>
      </SplitHandle>
      <Watermark>掘金技术社区 @ 递归掉发</Watermark>
    </Page>
  );
}
